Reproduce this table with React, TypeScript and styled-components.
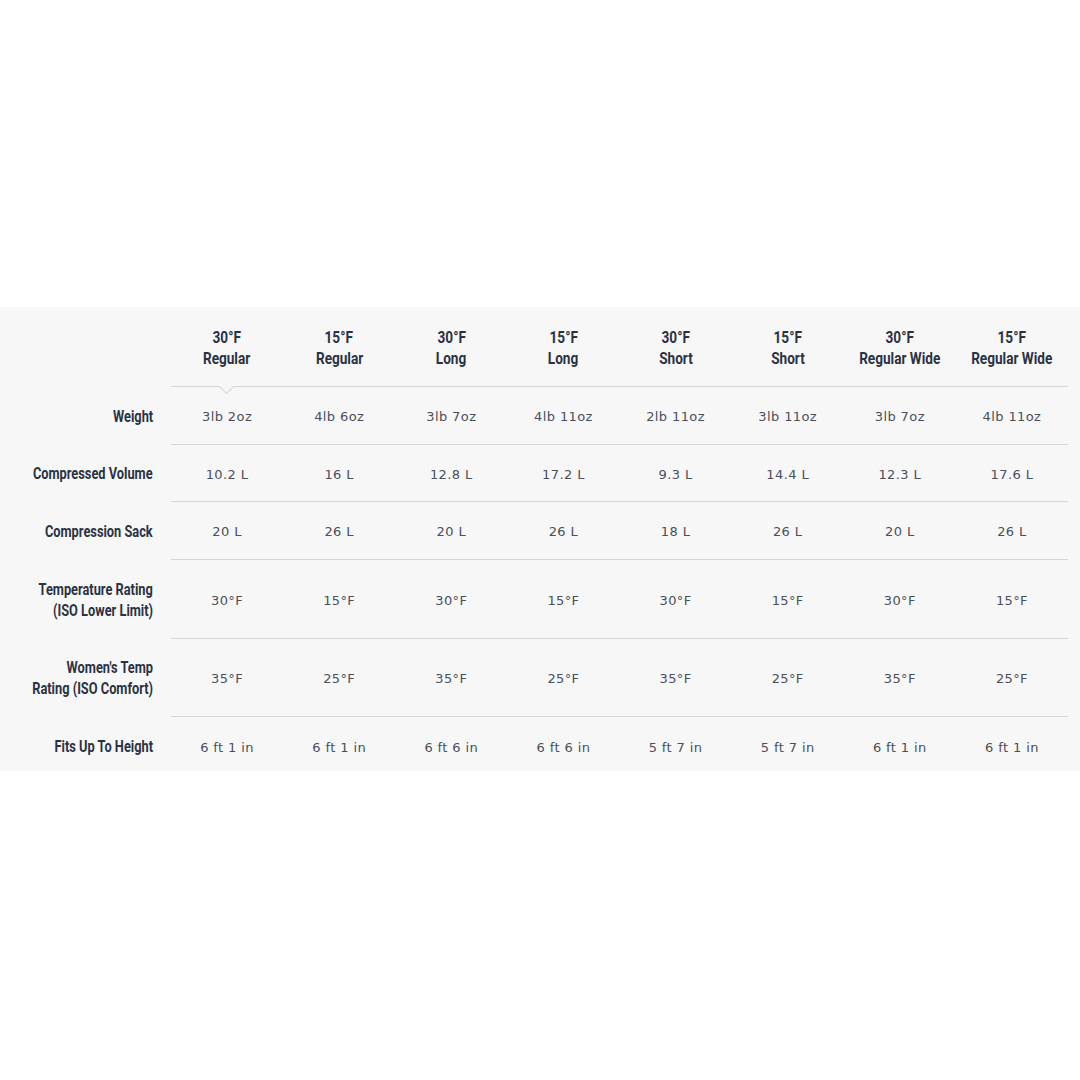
import { Fragment } from "react";
import styled, { createGlobalStyle } from "styled-components";

const GlobalStyle = createGlobalStyle`
  html, body {
    margin: 0;
    padding: 0;
    background: #ffffff;
  }
`;

const Page = styled.div`
  width: 1080px;
  height: 1080px;
  padding-top: 307px;
  box-sizing: border-box;
`;

const Panel = styled.div`
  background: #f7f7f7;
  display: grid;
  grid-template-columns: 171px repeat(8, 1fr);
  padding-right: 12px;
`;

// condensed look: no narrow face is installed, so squeeze Roboto horizontally
const Squeeze = styled.span<{ $origin?: string }>`
  display: inline-block;
  white-space: nowrap;
  transform: scaleX(0.8);
  transform-origin: ${(p) => p.$origin || "center"} center;
`;

const HeadCell = styled.div<{ $first?: boolean }>`
  position: relative;
  height: 80px;
  display: flex;
  align-items: center;
  justify-content: center;
  text-align: center;
  font-family: Roboto, "Liberation Sans", sans-serif;
  font-weight: 700;
  font-size: 17px;
  line-height: 21px;
  color: #2b3244;
  border-bottom: 1px solid #d6d6d6;
  padding-top: 2px;
  box-sizing: border-box;

  ${(p) =>
    p.$first &&
    `
    &::after {
      content: "";
      position: absolute;
      left: 50%;
      bottom: -6px;
      width: 10px;
      height: 10px;
      margin-left: -6px;
      background: #f7f7f7;
      border-right: 1px solid #d6d6d6;
      border-bottom: 1px solid #d6d6d6;
      transform: rotate(45deg);
    }
  `}
`;

const HeadText = styled.div`
  display: flex;
  flex-direction: column;
  align-items: center;
`;

const Corner = styled.div`
  height: 80px;
`;

const Label = styled.div<{ $h: number; $last?: boolean }>`
  height: ${(p) => p.$h}px;
  display: flex;
  flex-direction: column;
  align-items: flex-end;
  justify-content: center;
  padding-right: 18px;
  padding-top: ${(p) => (p.$last ? "5px" : "0")};
  box-sizing: border-box;
  font-family: Roboto, "Liberation Sans", sans-serif;
  font-weight: 700;
  font-size: 16px;
  line-height: 21px;
  color: #2b3244;
`;

const Value = styled.div<{ $h: number; $last?: boolean }>`
  height: ${(p) => p.$h}px;
  display: flex;
  align-items: center;
  justify-content: center;
  font-family: "DejaVu Sans", sans-serif;
  font-size: 13px;
  letter-spacing: 0.4px;
  color: #4a4f5b;
  border-bottom: ${(p) => (p.$last ? "none" : "1px solid #d6d6d6")};
  box-sizing: border-box;
  padding-top: ${(p) => (p.$last ? "6px" : "2px")};
`;

const columns = [
  ["30°F", "Regular"],
  ["15°F", "Regular"],
  ["30°F", "Long"],
  ["15°F", "Long"],
  ["30°F", "Short"],
  ["15°F", "Short"],
  ["30°F", "Regular Wide"],
  ["15°F", "Regular Wide"],
];

const rows: { label: string[]; h: number; values: string[] }[] = [
  {
    label: ["Weight"],
    h: 58,
    values: ["3lb 2oz", "4lb 6oz", "3lb 7oz", "4lb 11oz", "2lb 11oz", "3lb 11oz", "3lb 7oz", "4lb 11oz"],
  },
  {
    label: ["Compressed Volume"],
    h: 57,
    values: ["10.2 L", "16 L", "12.8 L", "17.2 L", "9.3 L", "14.4 L", "12.3 L", "17.6 L"],
  },
  {
    label: ["Compression Sack"],
    h: 58,
    values: ["20 L", "26 L", "20 L", "26 L", "18 L", "26 L", "20 L", "26 L"],
  },
  {
    label: ["Temperature Rating", "(ISO Lower Limit)"],
    h: 79,
    values: ["30°F", "15°F", "30°F", "15°F", "30°F", "15°F", "30°F", "15°F"],
  },
  {
    label: ["Women's Temp", "Rating (ISO Comfort)"],
    h: 78,
    values: ["35°F", "25°F", "35°F", "25°F", "35°F", "25°F", "35°F", "25°F"],
  },
  {
    label: ["Fits Up To Height"],
    h: 54,
    values: ["6 ft 1 in", "6 ft 1 in", "6 ft 6 in", "6 ft 6 in", "5 ft 7 in", "5 ft 7 in", "6 ft 1 in", "6 ft 1 in"],
  },
];

export default function App() {
  return (
    <Page>
      <GlobalStyle />
      <Panel>
        <Corner />
        {columns.map((c, i) => (
          <HeadCell key={i} $first={i === 0}>
            <HeadText>
              <Squeeze>{c[0]}</Squeeze>
              <Squeeze>{c[1]}</Squeeze>
            </HeadText>
          </HeadCell>
        ))}
        {rows.map((r, ri) => {
          const last = ri === rows.length - 1;
          return (
            <Fragment key={ri}>
              <Label $h={r.h} $last={last}>
                {r.label.map((t, ti) => (
                  <Squeeze key={ti} $origin="right">
                    {t}
                  </Squeeze>
                ))}
              </Label>
              {r.values.map((v, vi) => (
                <Value key={vi} $h={r.h} $last={last}>
                  {v}
                </Value>
              ))}
            </Fragment>
          );
        })}
      </Panel>
    </Page>
  );
}
